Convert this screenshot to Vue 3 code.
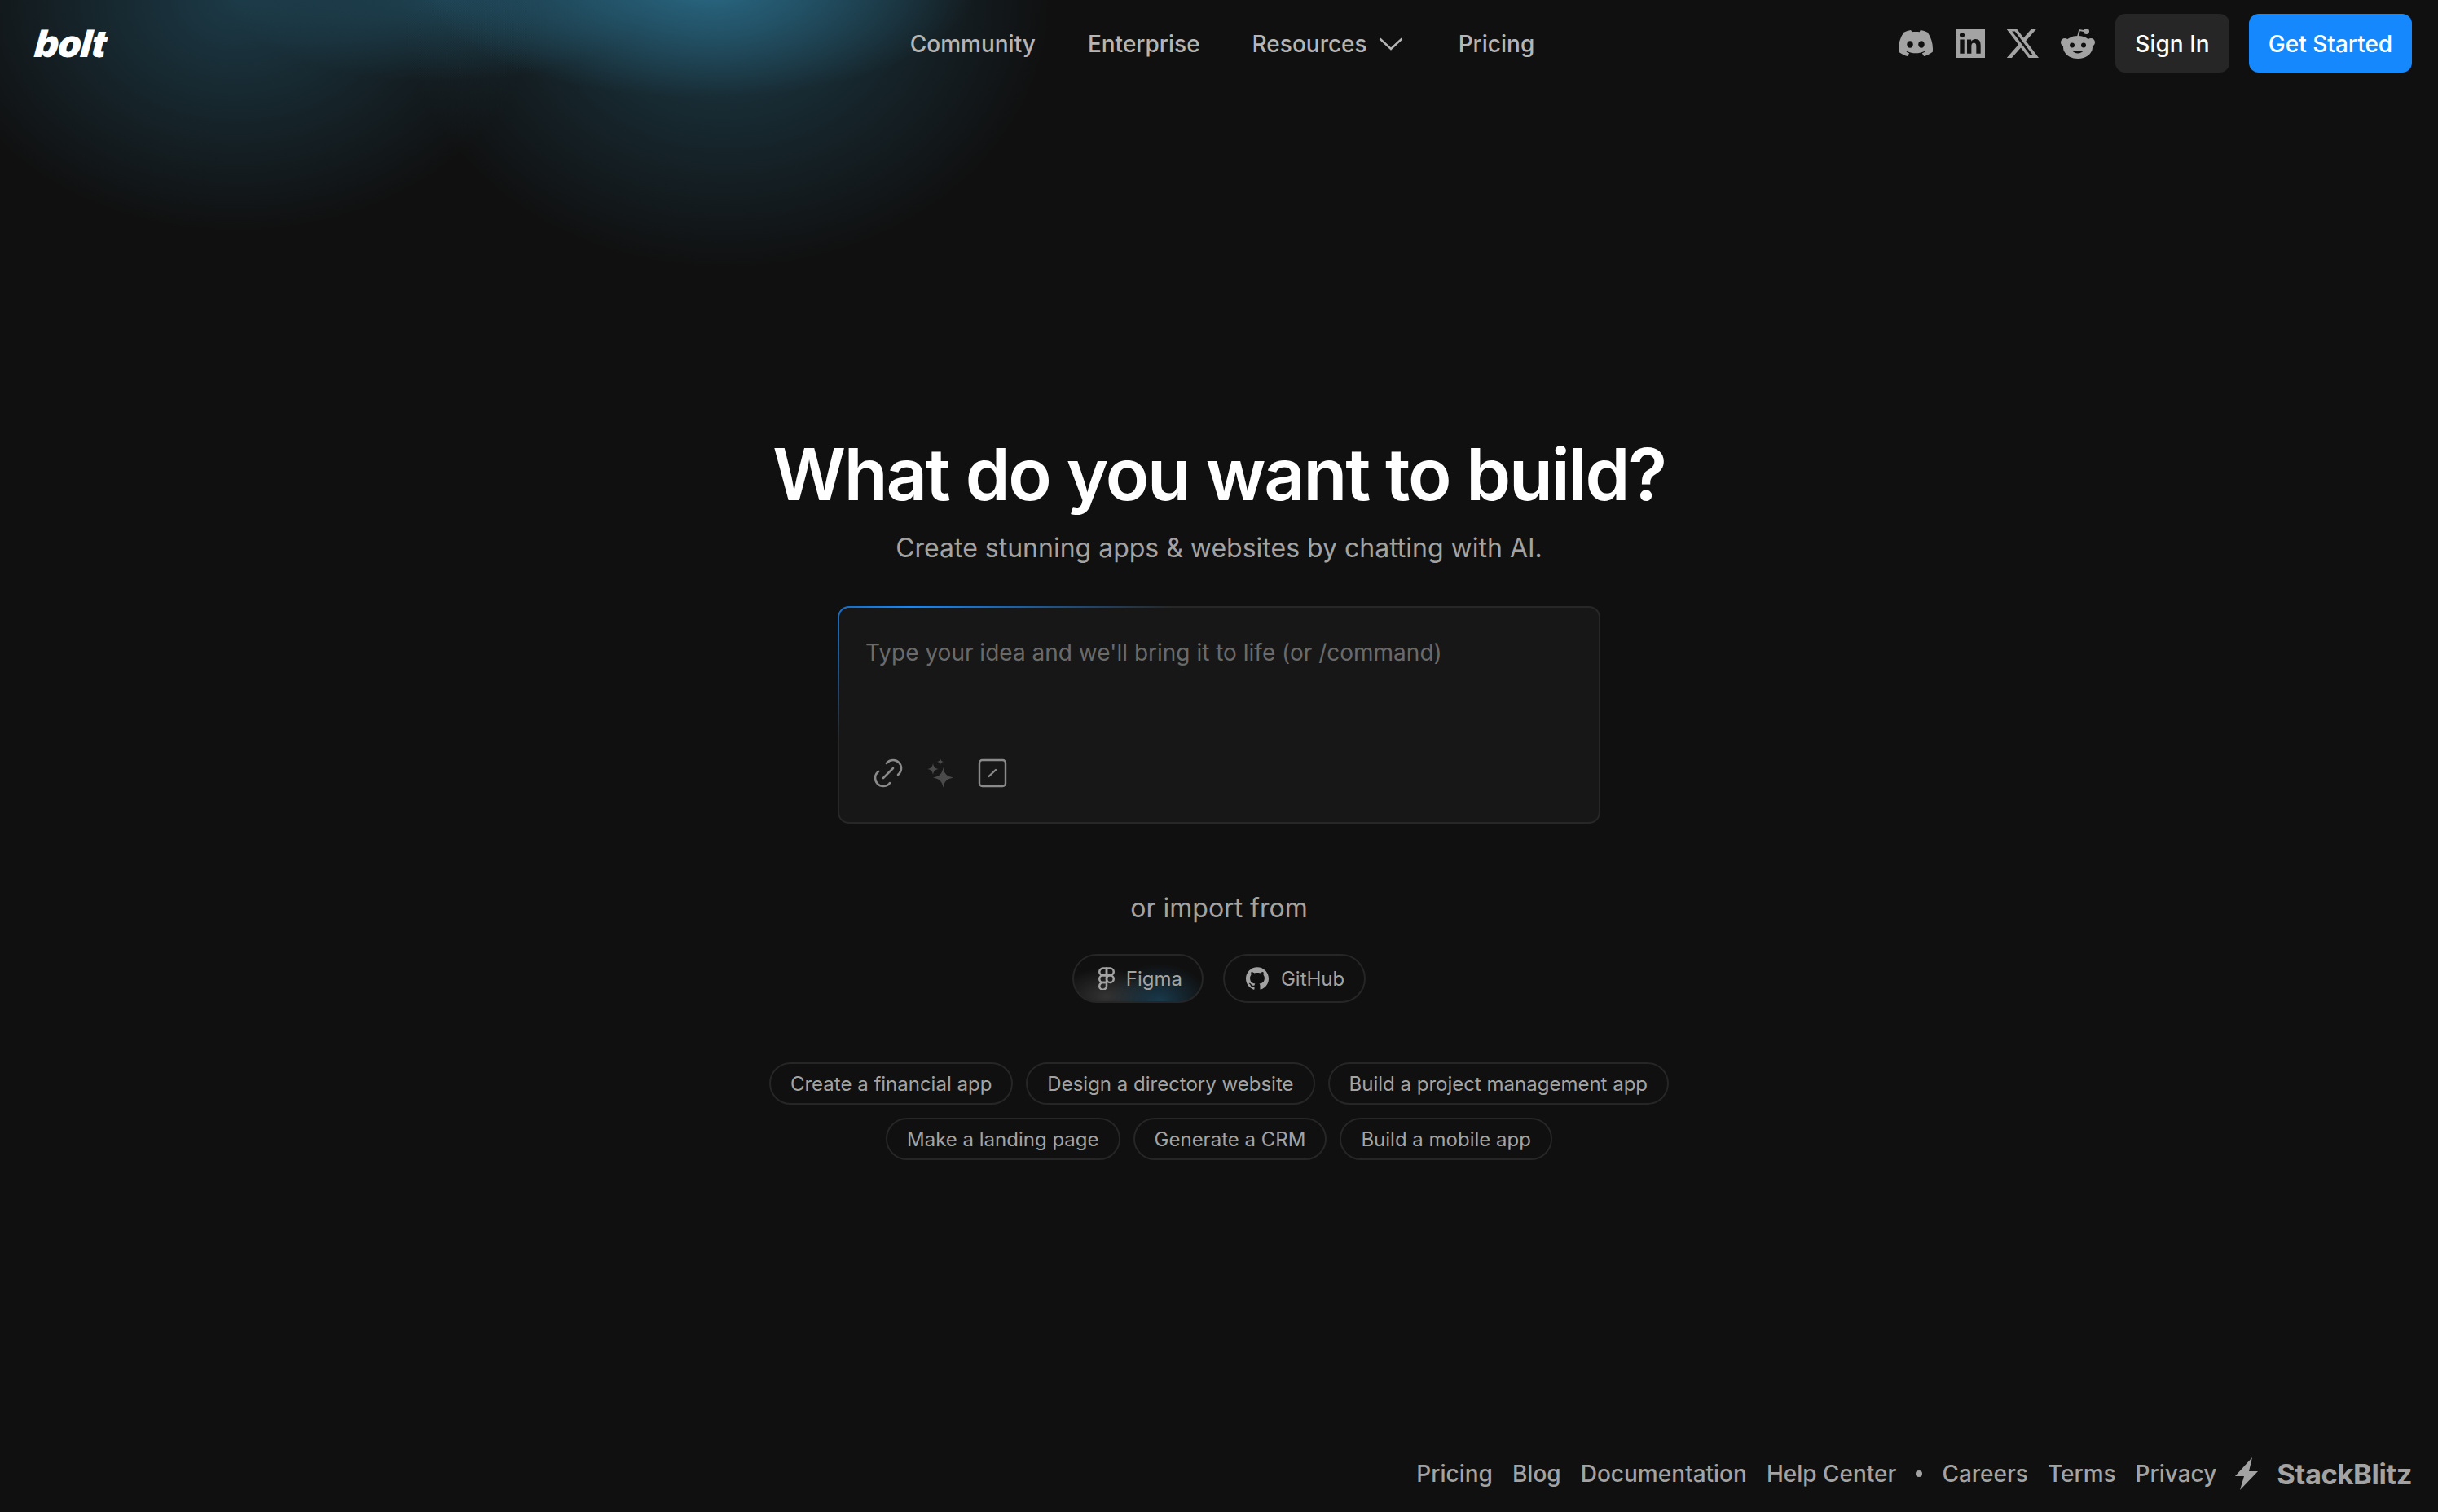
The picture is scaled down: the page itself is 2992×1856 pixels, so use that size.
<script setup>
const navItems = [
  { label: "Community" },
  { label: "Enterprise" },
  { label: "Resources", chevron: true },
  { label: "Pricing" },
];

const suggestionRows = [
  ["Create a financial app", "Design a directory website", "Build a project management app"],
  ["Make a landing page", "Generate a CRM", "Build a mobile app"],
];

const footerLinks = ["Pricing", "Blog", "Documentation", "Help Center"];
const footerLinksAfter = ["Careers", "Terms", "Privacy"];
</script>

<template>
  <div class="page">
    <div class="glow"></div>

    <header class="header">
      <div><a class="logo">bolt</a></div>
      <nav class="nav">
        <a v-for="item in navItems" :key="item.label" class="nav__link">
          {{ item.label }}
          <svg v-if="item.chevron" class="nav__chevron" viewBox="0 0 30 16" fill="none">
            <path d="M1.5 1.5 15 14 28.5 1.5" stroke="currentColor" stroke-width="2.4" />
          </svg>
        </a>
      </nav>
      <div class="header__right">
        <div class="socials">
          <svg class="social social--discord" viewBox="0 0 24 24" fill="currentColor">
            <path d="M20.317 4.3698a19.7913 19.7913 0 00-4.8851-1.5152.0741.0741 0 00-.0785.0371c-.211.3753-.4447.8648-.6083 1.2495-1.8447-.2762-3.68-.2762-5.4868 0-.1636-.3933-.4058-.8742-.6177-1.2495a.077.077 0 00-.0785-.037 19.7363 19.7363 0 00-4.8852 1.515.0699.0699 0 00-.0321.0277C.5334 9.0458-.319 13.5799.0992 18.0578a.0824.0824 0 00.0312.0561c2.0528 1.5076 4.0413 2.4228 5.9929 3.0294a.0777.0777 0 00.0842-.0276c.4616-.6304.8731-1.2952 1.226-1.9942a.076.076 0 00-.0416-.1057c-.6528-.2476-1.2743-.5495-1.8722-.8923a.077.077 0 01-.0076-.1277c.1258-.0943.2517-.1923.3718-.2914a.0743.0743 0 01.0776-.0105c3.9278 1.7933 8.18 1.7933 12.0614 0a.0739.0739 0 01.0785.0095c.1202.099.246.1981.3728.2924a.077.077 0 01-.0066.1276 12.2986 12.2986 0 01-1.873.8914.0766.0766 0 00-.0407.1067c.3604.698.7719 1.3628 1.225 1.9932a.076.076 0 00.0842.0286c1.961-.6067 3.9495-1.5219 6.0023-3.0294a.077.077 0 00.0313-.0552c.5004-5.177-.8382-9.6739-3.5485-13.6604a.061.061 0 00-.0312-.0286zM8.02 15.3312c-1.1825 0-2.1569-1.0857-2.1569-2.419 0-1.3332.9555-2.4189 2.157-2.4189 1.2108 0 2.1757 1.0952 2.1568 2.419 0 1.3332-.9555 2.4189-2.1569 2.4189zm7.9748 0c-1.1825 0-2.1569-1.0857-2.1569-2.419 0-1.3332.9554-2.4189 2.1569-2.4189 1.2108 0 2.1757 1.0952 2.1568 2.419 0 1.3332-.946 2.4189-2.1568 2.4189Z" />
          </svg>
          <svg class="social social--linkedin" viewBox="0 0 24 24" fill="currentColor">
            <path d="M20.447 20.452h-3.554v-5.569c0-1.328-.027-3.037-1.852-3.037-1.853 0-2.136 1.445-2.136 2.939v5.667H9.351V9h3.414v1.561h.046c.477-.9 1.637-1.85 3.37-1.85 3.601 0 4.267 2.37 4.267 5.455v6.286zM5.337 7.433c-1.144 0-2.063-.926-2.063-2.065 0-1.138.92-2.063 2.063-2.063 1.14 0 2.064.925 2.064 2.063 0 1.139-.925 2.065-2.064 2.065zm1.782 13.019H3.555V9h3.564v11.452zM24 0H0v24h24z" fill-rule="evenodd" />
          </svg>
          <svg class="social social--x" viewBox="0 0 24 24" fill="currentColor">
            <path d="M18.901 1.153h3.68l-8.04 9.19L24 22.846h-7.406l-5.8-7.584-6.638 7.584H.474l8.6-9.83L0 1.154h7.594l5.243 6.932ZM17.61 20.644h2.039L6.486 3.24H4.298Z" />
          </svg>
          <svg class="social social--reddit" viewBox="0 0 44 38" fill="currentColor">
            <circle cx="6" cy="18" r="5" />
            <circle cx="38" cy="18" r="5" />
            <ellipse cx="22" cy="24" rx="18" ry="14" />
            <circle cx="32.5" cy="4.5" r="3.5" />
            <path d="M22 11 24 3l8 1.5" fill="none" stroke="currentColor" stroke-width="1.8" />
            <circle cx="15" cy="21.5" r="3" fill="#101010" />
            <circle cx="29" cy="21.5" r="3" fill="#101010" />
            <path d="M15 28c3 4.600 11 4.600 14 0z" fill="#101010" />
          </svg>
        </div>
        <button class="btn btn--dark">Sign In</button>
        <button class="btn btn--blue">Get Started</button>
      </div>
    </header>

    <main class="main">
      <h1 class="title">What do you want to build?</h1>
      <p class="subtitle">Create stunning apps &amp; websites by chatting with AI.</p>

      <div class="prompt">
        <div class="prompt__placeholder">Type your idea and we'll bring it to life (or /command)</div>
        <div class="prompt__tools">
          <svg class="tool" viewBox="3 3 18 18" fill="none" stroke="currentColor" stroke-width="1.3" stroke-linecap="round" stroke-linejoin="round">
            <path d="M9 15l6-6" />
            <path d="M11 6l.463-.536a5 5 0 0 1 7.071 7.072l-.534.464" />
            <path d="M13 18l-.397.534a5.068 5.068 0 0 1-7.127 0 4.972 4.972 0 0 1 0-7.071l.524-.463" />
          </svg>
          <svg class="tool tool--dim" viewBox="0 0 36 36" fill="currentColor">
            <path d="M21.500 11c1.200 7.800 4.500 11 12.500 12.500-8 1.500-11.300 4.700-12.500 12.500-1.200-7.800-4.500-11-12.500-12.500 8-1.500 11.300-4.700 12.500-12.500z" />
            <path d="M9 6c.7 4.400 2.600 6.300 7 7-4.400.7-6.300 2.600-7 7-.7-4.400-2.600-6.300-7-7 4.400-.7 6.300-2.600 7-7z" />
            <path d="M18 0c.4 2.500 1.500 3.600 4 4-2.500.4-3.600 1.500-4 4-.4-2.500-1.500-3.600-4-4 2.500-.4 3.600-1.500 4-4z" />
          </svg>
          <svg class="tool" viewBox="0 0 36 36" fill="none" stroke="currentColor" stroke-width="2.400" stroke-linecap="round">
            <rect x="2" y="2" width="32" height="32" rx="3.500" />
            <path d="M13.500 22 22 14" />
          </svg>
        </div>
      </div>

      <p class="import-label">or import from</p>
      <div class="imports">
        <button class="import import--active">
          <svg class="import__icon import__icon--figma" viewBox="4 1 16 22" fill="none" stroke="currentColor" stroke-width="2" stroke-linecap="round" stroke-linejoin="round">
            <path d="M5 5.500A3.500 3.500 0 0 1 8.500 2H12v7H8.500A3.500 3.500 0 0 1 5 5.500z" />
            <path d="M12 2h3.500a3.500 3.500 0 1 1 0 7H12V2z" />
            <path d="M12 12.500a3.500 3.500 0 1 1 7 0 3.500 3.500 0 1 1-7 0z" />
            <path d="M5 19.500A3.500 3.500 0 0 1 8.500 16H12v3.500a3.500 3.500 0 1 1-7 0z" />
            <path d="M5 12.500A3.500 3.500 0 0 1 8.500 9H12v7H8.500A3.500 3.500 0 0 1 5 12.500z" />
          </svg>
          Figma
        </button>
        <button class="import import--github">
          <svg class="import__icon import__icon--github" viewBox="0 0 24 24" fill="currentColor">
            <path d="M12 .297c-6.630 0-12 5.373-12 12 0 5.303 3.438 9.800 8.205 11.385.600.113.820-.258.820-.577 0-.285-.010-1.040-.015-2.040-3.338.724-4.042-1.610-4.042-1.610C4.422 18.070 3.633 17.700 3.633 17.700c-1.087-.744.084-.729.084-.729 1.205.084 1.838 1.236 1.838 1.236 1.070 1.835 2.809 1.305 3.495.998.108-.776.417-1.305.760-1.605-2.665-.300-5.466-1.332-5.466-5.930 0-1.310.465-2.380 1.235-3.220-.135-.303-.540-1.523.105-3.176 0 0 1.005-.322 3.300 1.230.960-.267 1.980-.399 3-.405 1.020.006 2.040.138 3 .405 2.280-1.552 3.285-1.230 3.285-1.230.645 1.653.240 2.873.120 3.176.765.840 1.230 1.910 1.230 3.220 0 4.610-2.805 5.625-5.475 5.920.420.360.810 1.096.810 2.220 0 1.606-.015 2.896-.015 3.286 0 .315.210.690.825.570C20.565 22.092 24 17.592 24 12.297c0-6.627-5.373-12-12-12" />
          </svg>
          GitHub
        </button>
      </div>

      <div class="suggestions">
        <div v-for="(row, i) in suggestionRows" :key="i" class="suggestions__row">
          <button v-for="text in row" :key="text" class="chip">{{ text }}</button>
        </div>
      </div>
    </main>

    <footer class="footer">
      <a v-for="link in footerLinks" :key="link" class="footer__link">{{ link }}</a>
      <span class="footer__dot"></span>
      <a v-for="link in footerLinksAfter" :key="link" class="footer__link">{{ link }}</a>
      <span class="stackblitz">
        <svg class="stackblitz__bolt" viewBox="0 0 28 40" fill="currentColor">
          <path d="M0 23 21 0 17 17h11L6 40l5-17z" />
        </svg>
        <span class="stackblitz__name">StackBlitz</span>
      </span>
    </footer>
  </div>
</template>

<style>
html,
body {
  background: #101010;
}
</style>

<style scoped>
.page {
  position: relative;
  display: flex;
  flex-direction: column;
  width: 2992px;
  height: 1856px;
  overflow: hidden;
  background: #101010;
  color: #a3a3a3;
  font-family: Inter, "Noto Sans", sans-serif;
}

.glow {
  position: absolute;
  top: 0;
  left: 0;
  width: 1400px;
  height: 380px;
  background:
    radial-gradient(ellipse 340px 140px at 860px -20px, rgba(44, 115, 146, 0.8), transparent),
    radial-gradient(ellipse 400px 330px at 890px 0, rgba(44, 115, 146, 0.45), transparent),
    radial-gradient(ellipse 370px 285px at 290px 0, rgba(44, 115, 146, 0.42), transparent),
    radial-gradient(ellipse 260px 100px at 540px 0, rgba(44, 115, 146, 0.4), transparent);
}

.header {
  position: relative;
  display: grid;
  grid-template-columns: 1fr auto 1fr;
  align-items: center;
  height: 106px;
  padding: 0 32px 0 40px;
}

.logo {
  display: inline-block;
  margin-left: 3px;
  color: #fff;
  font-size: 46px;
  font-style: italic;
  font-weight: 900;
  letter-spacing: -1px;
  transform: skewX(-6deg);
}

.nav {
  display: flex;
  gap: 64px;
  align-items: center;
  padding-top: 2px;
}

.nav__link {
  display: flex;
  align-items: center;
  gap: 14px;
  color: #b5b5b5;
  font-size: 28px;
  font-weight: 500;
}

.nav__link:last-child {
  margin-left: 4px;
}

.nav__chevron {
  width: 30px;
  height: 16px;
}

.header__right {
  display: flex;
  align-items: center;
  justify-content: flex-end;
}

.socials {
  display: flex;
  align-items: center;
  margin-right: 24px;
}

.social {
  display: block;
  color: #a3a3a3;
}

.social--discord {
  width: 42px;
  height: 42px;
}

.social--linkedin {
  width: 36px;
  height: 36px;
  margin-left: 28px;
}

.social--x {
  width: 40px;
  height: 40px;
  margin-left: 26px;
}

.social--reddit {
  width: 44px;
  height: 38px;
  margin-left: 26px;
}

.btn {
  height: 72px;
  padding: 2px 0 0;
  border: 0;
  border-radius: 12px;
  color: #fff;
  font-family: inherit;
  font-size: 28px;
  font-weight: 500;
}

.btn--dark {
  width: 140px;
  background: #262626;
}

.btn--blue {
  width: 200px;
  margin-left: 24px;
  background: #1488fc;
}

.main {
  position: relative;
  display: flex;
  flex: 1;
  flex-direction: column;
  align-items: center;
  padding-top: 424px;
}

.title {
  margin: 0;
  color: #fff;
  font-size: 88px;
  font-weight: 600;
  line-height: 104px;
  letter-spacing: -2.2px;
}

.subtitle {
  margin: 19px 0 0;
  font-size: 32px;
  line-height: 40px;
}

.prompt {
  display: flex;
  flex-direction: column;
  justify-content: space-between;
  box-sizing: border-box;
  width: 936px;
  height: 267px;
  margin-top: 51px;
  padding: 37px 32px 42px;
  border: 2px solid transparent;
  border-radius: 14px;
  background:
    linear-gradient(#171717, #171717) padding-box,
    radial-gradient(ellipse 320px 170px at 90px 0, #1488fc, rgba(20, 136, 252, 0) 100%) border-box,
    linear-gradient(#272727, #272727) border-box;
}

.prompt__placeholder {
  color: #6a6a6a;
  font-size: 28px;
  line-height: 36px;
}

.prompt__tools {
  display: flex;
  gap: 28px;
  padding-left: 10px;
  color: #8a8a8a;
}

.tool {
  display: block;
  width: 36px;
  height: 36px;
}

.tool--dim {
  color: #4a4a4a;
}

.import-label {
  margin: 84px 0 0;
  font-size: 32px;
  line-height: 40px;
}

.imports {
  display: flex;
  gap: 24px;
  margin-top: 36px;
}

.import {
  display: flex;
  align-items: center;
  height: 60px;
  padding: 0 24px 0 26px;
  border: 2px solid #262626;
  border-radius: 30px;
  background: transparent;
  color: #a3a3a3;
  font-family: inherit;
  font-size: 24px;
}

.import--active {
  background:
    radial-gradient(ellipse 60px 45px at 105px 55px, rgba(30, 85, 115, 0.6), transparent),
    radial-gradient(ellipse 60px 35px at 40px 50px, rgba(80, 80, 80, 0.55), transparent);
}

.import__icon {
  height: 28px;
}

.import__icon--figma {
  width: 20px;
  margin: 0 14px 0 4px;
}

.import__icon--github {
  width: 28px;
  margin-right: 15px;
}

.suggestions {
  display: flex;
  flex-direction: column;
  gap: 16px;
  margin-top: 73px;
}

.suggestions__row {
  display: flex;
  justify-content: center;
  gap: 16px;
}

.chip {
  height: 52px;
  padding: 0 24px;
  border: 2px solid #262626;
  border-radius: 26px;
  background: transparent;
  color: #a3a3a3;
  font-family: inherit;
  font-size: 24px;
}

.footer {
  position: relative;
  display: flex;
  align-items: center;
  justify-content: flex-end;
  gap: 24px;
  height: 94px;
  padding-right: 32px;
  font-size: 28px;
  font-weight: 500;
}

.footer__dot {
  width: 8px;
  height: 8px;
  border-radius: 50%;
  background: #a3a3a3;
}

.stackblitz {
  display: flex;
  align-items: center;
  gap: 22px;
  margin-left: -2px;
}

.stackblitz__bolt {
  width: 30px;
  height: 40px;
}

.stackblitz__name {
  font-family: Inter, sans-serif;
  font-size: 34.5px;
  font-weight: 700;
  letter-spacing: -0.4px;
}
</style>
